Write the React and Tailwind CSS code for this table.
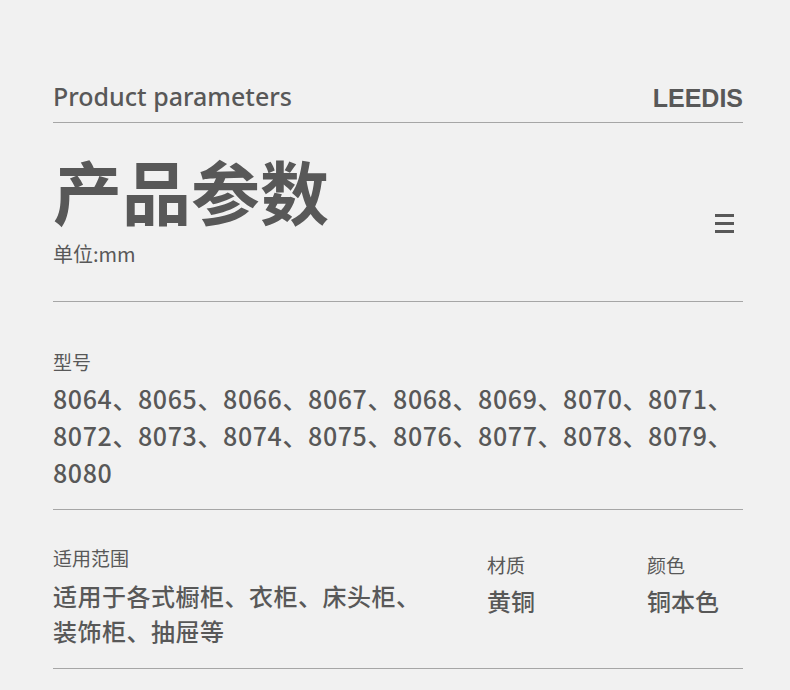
import React from "react";

const cjk = { fontFamily: '"Noto Sans CJK SC", "Noto Sans", sans-serif' };

const models = [
  "8064", "8065", "8066", "8067", "8068", "8069", "8070", "8071",
  "8072", "8073", "8074", "8075", "8076", "8077", "8078", "8079", "8080",
];

export default function App() {
  return (
    <div className="min-h-screen w-full bg-[#f1f1f1] text-[#585858]" style={cjk}>
      <div className="ml-[53px] w-[690px] pt-[80px]">

        {/* Header */}
        <div className="flex items-end justify-between border-b border-[#a6a6a6] pb-[10px]">
          <span className="text-[25px] leading-[32px] font-medium font-['Noto_Sans',sans-serif]">Product parameters</span>
          <span className="text-[25px] leading-[28px] font-bold font-['Liberation_Sans',Arial,sans-serif]">
            LEEDIS
          </span>
        </div>

        {/* Title */}
        <div className="flex items-end justify-between border-b border-[#a6a6a6] pt-[33px] pb-[34px]">
          <div>
            <h1 className="text-[69px] leading-[69px] font-bold">产品参数</h1>
            <div className="mt-[16px] text-[20px] leading-[26px]">单位:mm</div>
          </div>
          <div className="mb-[34px] mr-[9px] flex w-[19px] flex-col gap-[5px]">
            <span className="block h-[3px] bg-[#585858]" />
            <span className="block h-[3px] bg-[#585858]" />
            <span className="block h-[3px] bg-[#585858]" />
          </div>
        </div>

        {/* Models */}
        <div className="border-b border-[#a6a6a6] pt-[46px] pb-[18px]">
          <div className="text-[19px] leading-[28px]">型号</div>
          <div className="mt-[4px] text-[25px] leading-[37px] font-medium tracking-[0.6px]">
            {models.map((m, i) => (
              <span key={m}>
                {m}
                {i < models.length - 1 ? "、" : ""}
              </span>
            ))}
          </div>
        </div>

        {/* Usage / material / colour */}
        <div className="flex border-b border-[#a6a6a6] pt-[34px] pb-[20px]">
          <div className="w-[434px]">
            <div className="text-[19px] leading-[28px]">适用范围</div>
            <div className="mt-[6px] w-[380px] text-[24px] leading-[35px] font-medium tracking-[0.5px]">
              适用于各式橱柜、衣柜、床头柜、装饰柜、抽屉等
            </div>
          </div>
          <div className="w-[160px] pt-[7px]">
            <div className="text-[19px] leading-[28px]">材质</div>
            <div className="mt-[4px] text-[24px] leading-[35px] font-medium">黄铜</div>
          </div>
          <div className="pt-[7px]">
            <div className="text-[19px] leading-[28px]">颜色</div>
            <div className="mt-[4px] text-[24px] leading-[35px] font-medium">铜本色</div>
          </div>
        </div>

      </div>
    </div>
  );
}
